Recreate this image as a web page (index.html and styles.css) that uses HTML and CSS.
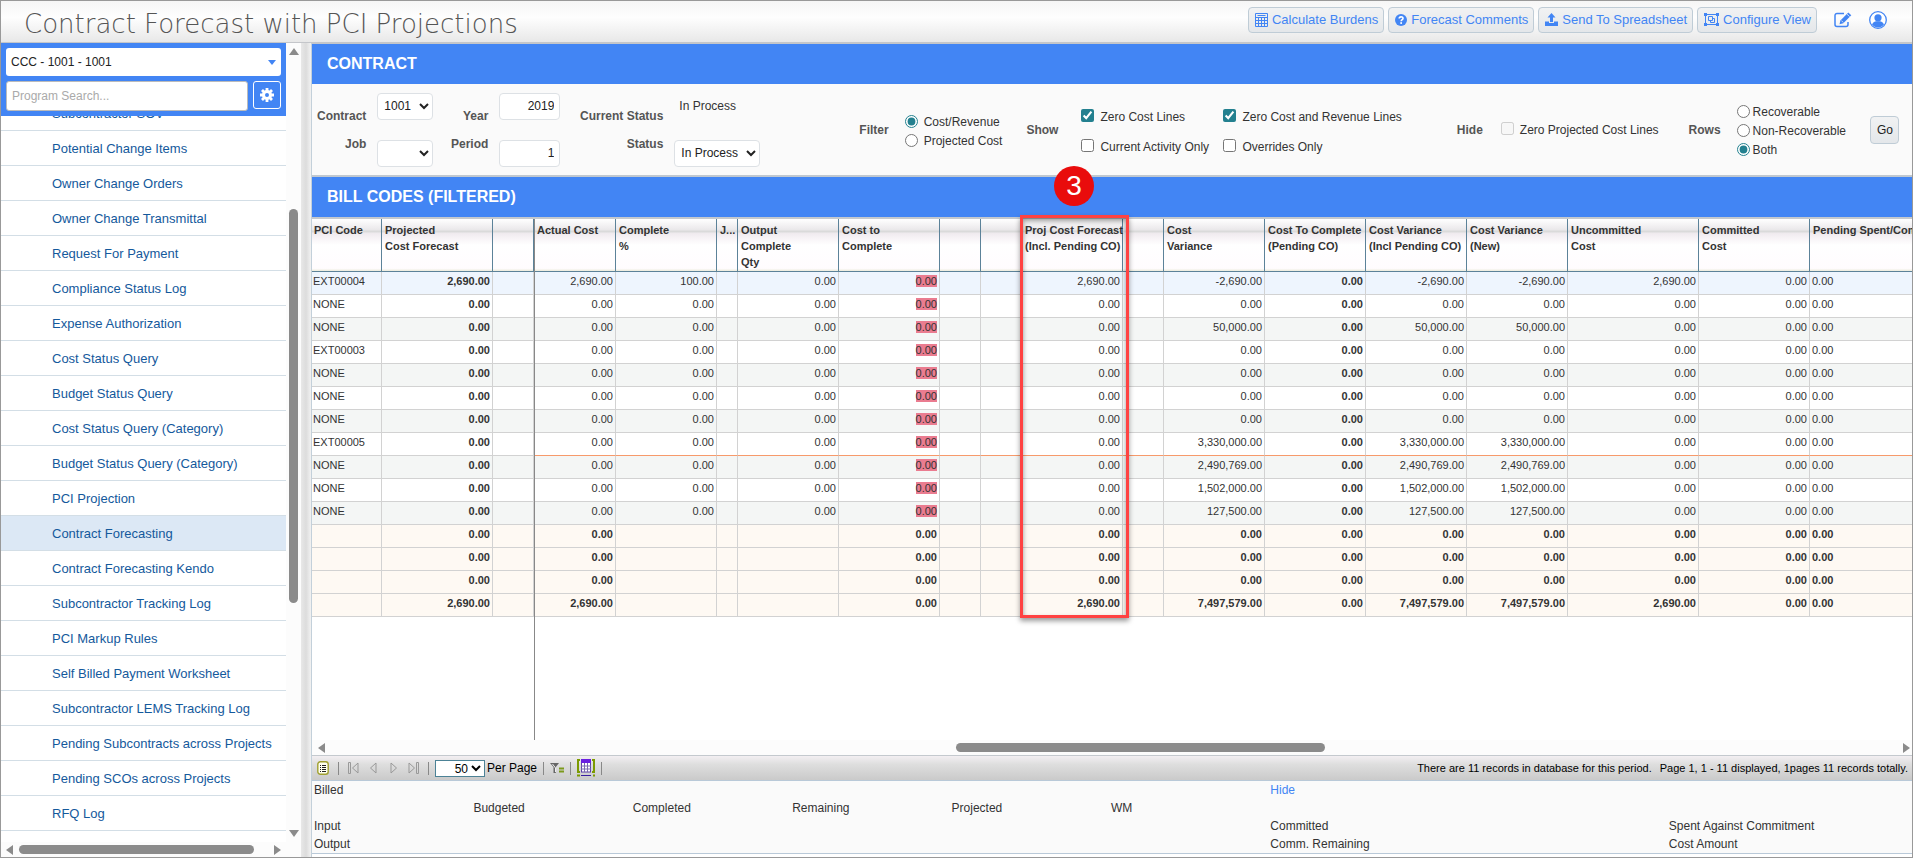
FILE: index.html
```html
<!DOCTYPE html>
<html lang="en">
<head>
    <meta charset="UTF-8">
    <meta name="viewport" content="width=device-width, initial-scale=1.0">
    <title>Contract Forecast with PCI Projections</title>
    <link rel="stylesheet" href="styles.css">
</head>
<body>
    <header class="topbar">
        <h1>Contract Forecast with PCI Projections</h1>
        <div class="actions">
            <button class="btn">
                <svg width="13" height="14" viewBox="0 0 13 14" fill="none" stroke="#4285f4"><path d="M.5.5h12v13H.5zM.5 4.5h12M.5 7.500h12M.5 10.500h12M3.500 4.500v9M6.500 4.500v9M9.500 4.500v9M2.500 2.500h8"/></svg>
                Calculate Burdens
            </button>
            <button class="btn">
                <svg width="12" height="12" viewBox="0 0 12 12"><circle cx="6" cy="6" r="6" fill="#4285f4"/><path d="M4.200 4.500C4.200 2.300 8 2.300 8 4.400 8 5.700 6.200 5.700 6.200 7.200" fill="none" stroke="#fff" stroke-width="1.600"/><rect x="5.300" y="8.200" width="1.700" height="1.700" fill="#fff"/></svg>
                Forecast Comments
            </button>
            <button class="btn">
                <svg width="13" height="13" viewBox="0 0 13 13" fill="#4285f4"><path d="M6.500 0l4 4.500H8V9H5V4.500H2.500zM0 8.500h4V10h5V8.500h4V13H0z"/></svg>
                Send To Spreadsheet
            </button>
            <button class="btn">
                <svg width="15" height="13" viewBox="0 0 15 13" fill="none" stroke="#4285f4"><path d="M1.500 1.500h12v10h-12zM4.500 3.500h4v4h-4zM8.500 5.500h2v4h-4v-2"/><path d="M0 0h3v3H0zM12 0h3v3h-3zM0 10h3v3H0zM12 10h3v3h-3z" fill="#4285f4" stroke="none"/></svg>
                Configure View
            </button>
            <button class="icon-btn" aria-label="Edit">
                <svg width="18" height="16" viewBox="0 0 18 16" fill="none" stroke="#4285f4" stroke-width="1.500"><path d="M10 1.500H3A2 2 0 0 0 1 3.500v9a2 2 0 0 0 2 2h9a2 2 0 0 0 2-2V10"/><path d="M14.300.5l3 2.700-8 8-3.800 1 .9-3.800z" fill="#4285f4" stroke="none"/><path d="M7.300 8.500l2 2M13 2.200l2.600 2.400" stroke="#f4f4f4" stroke-width=".8"/></svg>
            </button>
            <button class="icon-btn" aria-label="User">
                <svg width="18" height="18" viewBox="0 0 18 18"><circle cx="9" cy="9" r="8.300" fill="#fff" stroke="#4285f4" stroke-width="1.300"/><circle cx="9" cy="6.800" r="3.600" fill="#4285f4"/><path d="M3 13.500C4 11 6 10.600 7 10.300h4c1 .3 3 .7 4 3.200C12 17.500 6 17.500 3 13.500z" fill="#4285f4"/></svg>
            </button>
        </div>
    </header>

    <div class="layout">
        <aside class="sidebar">
            <div class="sidebar-body">
                <div class="nav-col">
                    <div class="search-box">
                        <button class="project">CCC - 1001 - 1001 <span class="caret"></span></button>
                        <div class="search-row">
                            <input type="text" class="search" placeholder="Program Search..." aria-label="Program Search">
                            <button class="gear" aria-label="Settings">
                                <svg width="14" height="14" viewBox="0 0 14 14"><circle cx="7" cy="7" r="3.500" fill="none" stroke="#fff" stroke-width="3"/><path d="M7 0v3M7 11v3M0 7h3M11 7h3M2 2l2.200 2.200M9.800 9.800L12 12M12 2L9.800 4.200M4.200 9.800L2 12" stroke="#fff" stroke-width="2.800"/></svg>
                            </button>
                        </div>
                    </div>
                    <nav class="menu">
                        <a href="#">Subcontractor SOV</a>
                        <a href="#">Potential Change Items</a>
                        <a href="#">Owner Change Orders</a>
                        <a href="#">Owner Change Transmittal</a>
                        <a href="#">Request For Payment</a>
                        <a href="#">Compliance Status Log</a>
                        <a href="#">Expense Authorization</a>
                        <a href="#">Cost Status Query</a>
                        <a href="#">Budget Status Query</a>
                        <a href="#">Cost Status Query (Category)</a>
                        <a href="#">Budget Status Query (Category)</a>
                        <a href="#">PCI Projection</a>
                        <a href="#" class="active">Contract Forecasting</a>
                        <a href="#">Contract Forecasting Kendo</a>
                        <a href="#">Subcontractor Tracking Log</a>
                        <a href="#">PCI Markup Rules</a>
                        <a href="#">Self Billed Payment Worksheet</a>
                        <a href="#">Subcontractor LEMS Tracking Log</a>
                        <a href="#">Pending Subcontracts across Projects</a>
                        <a href="#">Pending SCOs across Projects</a>
                        <a href="#">RFQ Log</a>
                    </nav>
                </div>
                <div class="vscroll">
                    <span class="arrow up"></span>
                    <div class="track"><div class="thumb"></div></div>
                    <span class="arrow down"></span>
                </div>
            </div>
            <div class="hscroll side-hscroll">
                <span class="arrow left"></span>
                <div class="thumb"></div>
                <span class="arrow right"></span>
            </div>
        </aside>
        <div class="splitter"></div>

        <main class="content">
            <h2 class="section-title">CONTRACT</h2>
            <form class="filters">
                <div class="labels first">
                    <label for="contract">Contract</label>
                    <label for="job">Job</label>
                </div>
                <div class="controls">
                    <select id="contract" class="w-small"><option>1001</option></select>
                    <select id="job" class="w-small"><option></option></select>
                </div>
                <div class="labels second">
                    <label for="year">Year</label>
                    <label for="period">Period</label>
                </div>
                <div class="controls">
                    <input type="text" id="year" value="2019">
                    <input type="text" id="period" value="1">
                </div>
                <div class="labels third">
                    <span>Current Status</span>
                    <label for="status">Status</label>
                </div>
                <div class="controls">
                    <span class="static">In Process</span>
                    <select id="status" class="w-status"><option>In Process</option></select>
                </div>

                <div class="group filter-group">
                    <b>Filter</b>
                    <div class="radios">
                        <label><input type="radio" name="filter" checked> Cost/Revenue</label>
                        <label><input type="radio" name="filter"> Projected Cost</label>
                    </div>
                </div>
                <div class="group show-group">
                    <b>Show</b>
                    <div class="checks">
                        <label><input type="checkbox" checked> Zero Cost Lines</label>
                        <label><input type="checkbox" checked> Zero Cost and Revenue Lines</label>
                        <label><input type="checkbox"> Current Activity Only</label>
                        <label><input type="checkbox"> Overrides Only</label>
                    </div>
                </div>
                <div class="group hide-group">
                    <b>Hide</b>
                    <label><input type="checkbox" disabled> Zero Projected Cost Lines</label>
                </div>
                <div class="group rows-group">
                    <b>Rows</b>
                    <div class="radios tight">
                        <label><input type="radio" name="rows"> Recoverable</label>
                        <label><input type="radio" name="rows"> Non-Recoverable</label>
                        <label><input type="radio" name="rows" checked> Both</label>
                    </div>
                </div>
                <button type="button" class="btn go">Go</button>
            </form>

            <h2 class="section-title">BILL CODES (FILTERED)</h2>
            <div class="grid-wrap">
                <div class="grid-view">
                    <table class="grid">
                        <colgroup>
                            <col class="c-code"><col class="c-med"><col class="c-gap"><col class="c-actual"><col class="c-num"><col class="c-tiny"><col class="c-num"><col class="c-num"><col class="c-gap"><col class="c-gap"><col class="c-num"><col class="c-gap"><col class="c-num"><col class="c-num"><col class="c-num"><col class="c-num"><col class="c-wide"><col class="c-med"><col class="c-wide">
                        </colgroup>
                        <thead>
                            <tr><th>PCI Code</th><th>Projected<br>Cost Forecast</th><th></th><th>Actual Cost</th><th>Complete<br>%</th><th>J...</th><th>Output<br>Complete<br>Qty</th><th>Cost to<br>Complete</th><th></th><th></th><th>Proj Cost Forecast<br>(Incl. Pending CO)</th><th></th><th>Cost<br>Variance</th><th>Cost To Complete<br>(Pending CO)</th><th>Cost Variance<br>(Incl Pending CO)</th><th>Cost Variance<br>(New)</th><th>Uncommitted<br>Cost</th><th>Committed<br>Cost</th><th>Pending Spent/Com</th></tr>
                        </thead>
                        <tbody>
                            <tr class="selected"><td>EXT00004</td><td>2,690.00</td><td></td><td>2,690.00</td><td>100.00</td><td></td><td>0.00</td><td><mark>0.00</mark></td><td></td><td></td><td>2,690.00</td><td></td><td>-2,690.00</td><td>0.00</td><td>-2,690.00</td><td>-2,690.00</td><td>2,690.00</td><td>0.00</td><td>0.00</td></tr>
                            <tr><td>NONE</td><td>0.00</td><td></td><td>0.00</td><td>0.00</td><td></td><td>0.00</td><td><mark>0.00</mark></td><td></td><td></td><td>0.00</td><td></td><td>0.00</td><td>0.00</td><td>0.00</td><td>0.00</td><td>0.00</td><td>0.00</td><td>0.00</td></tr>
                            <tr><td>NONE</td><td>0.00</td><td></td><td>0.00</td><td>0.00</td><td></td><td>0.00</td><td><mark>0.00</mark></td><td></td><td></td><td>0.00</td><td></td><td>50,000.00</td><td>0.00</td><td>50,000.00</td><td>50,000.00</td><td>0.00</td><td>0.00</td><td>0.00</td></tr>
                            <tr><td>EXT00003</td><td>0.00</td><td></td><td>0.00</td><td>0.00</td><td></td><td>0.00</td><td><mark>0.00</mark></td><td></td><td></td><td>0.00</td><td></td><td>0.00</td><td>0.00</td><td>0.00</td><td>0.00</td><td>0.00</td><td>0.00</td><td>0.00</td></tr>
                            <tr><td>NONE</td><td>0.00</td><td></td><td>0.00</td><td>0.00</td><td></td><td>0.00</td><td><mark>0.00</mark></td><td></td><td></td><td>0.00</td><td></td><td>0.00</td><td>0.00</td><td>0.00</td><td>0.00</td><td>0.00</td><td>0.00</td><td>0.00</td></tr>
                            <tr><td>NONE</td><td>0.00</td><td></td><td>0.00</td><td>0.00</td><td></td><td>0.00</td><td><mark>0.00</mark></td><td></td><td></td><td>0.00</td><td></td><td>0.00</td><td>0.00</td><td>0.00</td><td>0.00</td><td>0.00</td><td>0.00</td><td>0.00</td></tr>
                            <tr><td>NONE</td><td>0.00</td><td></td><td>0.00</td><td>0.00</td><td></td><td>0.00</td><td><mark>0.00</mark></td><td></td><td></td><td>0.00</td><td></td><td>0.00</td><td>0.00</td><td>0.00</td><td>0.00</td><td>0.00</td><td>0.00</td><td>0.00</td></tr>
                            <tr class="marked"><td>EXT00005</td><td>0.00</td><td></td><td>0.00</td><td>0.00</td><td></td><td>0.00</td><td><mark>0.00</mark></td><td></td><td></td><td>0.00</td><td></td><td>3,330,000.00</td><td>0.00</td><td>3,330,000.00</td><td>3,330,000.00</td><td>0.00</td><td>0.00</td><td>0.00</td></tr>
                            <tr><td>NONE</td><td>0.00</td><td></td><td>0.00</td><td>0.00</td><td></td><td>0.00</td><td><mark>0.00</mark></td><td></td><td></td><td>0.00</td><td></td><td>2,490,769.00</td><td>0.00</td><td>2,490,769.00</td><td>2,490,769.00</td><td>0.00</td><td>0.00</td><td>0.00</td></tr>
                            <tr><td>NONE</td><td>0.00</td><td></td><td>0.00</td><td>0.00</td><td></td><td>0.00</td><td><mark>0.00</mark></td><td></td><td></td><td>0.00</td><td></td><td>1,502,000.00</td><td>0.00</td><td>1,502,000.00</td><td>1,502,000.00</td><td>0.00</td><td>0.00</td><td>0.00</td></tr>
                            <tr><td>NONE</td><td>0.00</td><td></td><td>0.00</td><td>0.00</td><td></td><td>0.00</td><td><mark>0.00</mark></td><td></td><td></td><td>0.00</td><td></td><td>127,500.00</td><td>0.00</td><td>127,500.00</td><td>127,500.00</td><td>0.00</td><td>0.00</td><td>0.00</td></tr>
                        </tbody>
                        <tfoot>
                            <tr><td></td><td>0.00</td><td></td><td>0.00</td><td></td><td></td><td></td><td>0.00</td><td></td><td></td><td>0.00</td><td></td><td>0.00</td><td>0.00</td><td>0.00</td><td>0.00</td><td>0.00</td><td>0.00</td><td>0.00</td></tr>
                            <tr><td></td><td>0.00</td><td></td><td>0.00</td><td></td><td></td><td></td><td>0.00</td><td></td><td></td><td>0.00</td><td></td><td>0.00</td><td>0.00</td><td>0.00</td><td>0.00</td><td>0.00</td><td>0.00</td><td>0.00</td></tr>
                            <tr><td></td><td>0.00</td><td></td><td>0.00</td><td></td><td></td><td></td><td>0.00</td><td></td><td></td><td>0.00</td><td></td><td>0.00</td><td>0.00</td><td>0.00</td><td>0.00</td><td>0.00</td><td>0.00</td><td>0.00</td></tr>
                            <tr><td></td><td>2,690.00</td><td></td><td>2,690.00</td><td></td><td></td><td></td><td>0.00</td><td></td><td></td><td>2,690.00</td><td></td><td>7,497,579.00</td><td>0.00</td><td>7,497,579.00</td><td>7,497,579.00</td><td>2,690.00</td><td>0.00</td><td>0.00</td></tr>
                        </tfoot>
                    </table>
                </div>
                <div class="highlight"></div>
                <div class="callout">3</div>
            </div>
            <div class="hscroll grid-hscroll">
                <span class="arrow left"></span>
                <div class="track"><div class="thumb"></div></div>
                <span class="arrow right"></span>
            </div>

            <div class="pager">
                <button class="tool" aria-label="Menu">
                    <svg width="12" height="14" viewBox="0 0 12 14"><rect x=".8" y=".8" width="10.400" height="12.400" rx="2.500" fill="#fffff0" stroke="#a0a030" stroke-width="1.400"/><path d="M3 4.500h1M5 4.500h4M3 6.500h1M5 6.500h4M3 8.500h1M5 8.500h4M3 10.500h1M5 10.500h4" stroke="#222"/></svg>
                </button>
                <span class="sep"></span>
                <button class="tool" aria-label="First page"><svg width="11" height="12" viewBox="0 0 11 12" fill="none" stroke="#999"><path d="M.5.5h2v11h-2zM10 1v10L4.500 6z"/></svg></button>
                <button class="tool" aria-label="Previous page"><svg width="11" height="12" viewBox="0 0 11 12" fill="none" stroke="#999"><path d="M8 1v10L2.500 6z"/></svg></button>
                <button class="tool" aria-label="Next page"><svg width="11" height="12" viewBox="0 0 11 12" fill="none" stroke="#999"><path d="M3 1v10L8.500 6z"/></svg></button>
                <button class="tool" aria-label="Last page"><svg width="11" height="12" viewBox="0 0 11 12" fill="none" stroke="#999"><path d="M8.500.5h2v11h-2zM1 1v10L6.500 6z"/></svg></button>
                <div class="pager-options">
                    <span class="sep"></span>
                    <select id="perpage" class="per-page"><option>50</option></select>
                    <label for="perpage">Per Page</label>
                    <span class="sep"></span>
                    <button class="tool" aria-label="Filter"><svg width="14" height="10" viewBox="0 0 14 10"><path d="M0 0h9L5.800 4v6H3.500V4z" fill="#666"/><path d="M2.500 1l3 4v4" stroke="#eee" fill="none"/><path d="M9 5.500h5M9 8.500h5" stroke="#7c9a1c" stroke-width="2"/></svg></button>
                    <span class="sep"></span>
                    <button class="tool" aria-label="Columns"><svg width="18" height="18" viewBox="0 0 18 18"><path d="M3 1H1v12h2M15 1h2v12h-2M0 16.500h3M16 16.500h2" fill="none" stroke="#7c9a00" stroke-width="2"/><rect x="4.500" y="1" width="9" height="12" fill="#fff" stroke="#5b3fa8"/><rect x="4" y="0" width="10" height="4" fill="#6a1fe0"/><path d="M4 7h10M4 10h10M7.500 4v9M10.500 4v9" stroke="#7a6ab0"/><path d="M4 16.500h10" stroke="#3a1fa0"/></svg></button>
                    <span class="sep"></span>
                </div>
                <div class="pager-info"><span>There are 11 records in database for this period.</span><span>Page 1, 1 - 11 displayed, 1pages 11 records totally.</span></div>
            </div>

            <div class="summary">
                <span>Billed</span><span></span><span></span><span></span><span></span><span></span><a href="#">Hide</a><span></span>
                <span></span><span>Budgeted</span><span>Completed</span><span>Remaining</span><span>Projected</span><span>WM</span><span></span><span></span>
                <span>Input</span><span></span><span></span><span></span><span></span><span></span><span>Committed</span><span>Spent Against Commitment</span>
                <span>Output</span><span></span><span></span><span></span><span></span><span></span><span>Comm. Remaining</span><span>Cost Amount</span>
            </div>
        </main>
    </div>
</body>
</html>
```
FILE: styles.css
```css
* {
    box-sizing: border-box;
}
body {
    font-family: "Liberation Sans", Arial, sans-serif;
    font-size: 12px;
    color: #333;
    margin: 0;
    height: 100vh;
    display: flex;
    flex-direction: column;
    border: 1px solid #999;
    overflow: hidden;
    background-color: white;
}
button, select, input {
    font-family: inherit;
    font-size: inherit;
    margin: 0;
}
button {
    cursor: pointer;
}
a {
    color: #4285f4;
    text-decoration: none;
}

/* top bar */
.topbar {
    display: flex;
    justify-content: space-between;
    align-items: center;
    height: 42px;
    flex-shrink: 0;
    padding: 0 25px 4px 23px;
    border-bottom: 1px solid #c4c6ca;
    background: linear-gradient(#f6f6f6, #fefefe 40%, #e8e8e8);
}
.topbar h1 {
    font-family: "DejaVu Sans", Verdana, sans-serif;
    font-weight: 200;
    font-size: 26px;
    line-height: 26px;
    margin: 0;
    padding-top: 8px;
    color: #555;
    white-space: nowrap;
}
.actions {
    display: flex;
    align-items: center;
    gap: 4px;
}
.btn {
    display: flex;
    align-items: center;
    gap: 4px;
    height: 26px;
    padding: 0 5px 0 6px;
    border: 1px solid #bfccd6;
    border-radius: 4px;
    background: linear-gradient(#f1f2f3, #e4e7ea);
    color: #4285f4;
    font-size: 13px;
    white-space: nowrap;
}
.icon-btn {
    display: flex;
    padding: 0;
    margin-left: 13px;
    border: none;
    background: none;
}

/* side menu */
.layout {
    display: flex;
    flex: 1;
    min-height: 0;
}
.sidebar {
    display: flex;
    flex-direction: column;
    width: 300px;
    flex-shrink: 0;
}
.sidebar-body {
    display: flex;
    flex: 1;
    min-height: 0;
}
.nav-col {
    display: flex;
    flex-direction: column;
    flex: 1;
    min-width: 0;
}
.search-box {
    padding: 5px;
    height: 73px;
    flex-shrink: 0;
    background-color: #4285f4;
    z-index: 1;
}
.project {
    display: flex;
    justify-content: space-between;
    align-items: center;
    width: 100%;
    height: 28px;
    padding: 0 5px;
    border: none;
    border-radius: 3px;
    background-color: white;
    color: #222;
}
.caret {
    border: 4px solid transparent;
    border-top: 5px solid #4285f4;
    border-bottom: none;
}
.search-row {
    display: flex;
    gap: 5px;
    margin-top: 5px;
}
.search {
    flex: 1;
    min-width: 0;
    height: 30px;
    padding: 0 5px;
    border: 1px solid #bbb;
    border-radius: 3px;
}
.search::placeholder {
    color: #aaa;
}
.gear {
    display: flex;
    align-items: center;
    justify-content: center;
    width: 28px;
    height: 28px;
    padding: 0;
    border: 1px solid white;
    border-radius: 3px;
    background-color: #4285f4;
}
.menu {
    display: flex;
    flex-direction: column;
    flex: 1;
    min-height: 0;
    margin-top: -20px;
    overflow: hidden;
}
.menu a {
    height: 35px;
    flex-shrink: 0;
    padding-left: 51px;
    line-height: 35px;
    font-size: 13px;
    color: #14599c;
    border-bottom: 1px solid #d3dee6;
    white-space: nowrap;
}
.menu a.active {
    background-color: #dce8f5;
}

/* scroll bars */
.arrow {
    flex-shrink: 0;
    border: 5px solid transparent;
}
.arrow.up {
    border-top: none;
    border-bottom: 7px solid #8b8b8b;
}
.arrow.down {
    border-bottom: none;
    border-top: 7px solid #8b8b8b;
}
.arrow.left {
    border-left: none;
    border-right: 7px solid #8b8b8b;
}
.arrow.right {
    border-right: none;
    border-left: 7px solid #8b8b8b;
}
.thumb {
    background-color: #8b8b8b;
    border-radius: 5px;
}
.vscroll {
    display: flex;
    flex-direction: column;
    align-items: center;
    width: 15px;
    padding: 5px 0;
    background-color: #fcfcfc;
}
.vscroll .track {
    flex: 1;
    padding-top: 154px;
}
.vscroll .thumb {
    width: 9px;
    height: 394px;
}
.hscroll {
    display: flex;
    align-items: center;
    flex-shrink: 0;
    height: 15px;
    background-color: #fcfcfc;
}
.hscroll .thumb {
    height: 9px;
}
.side-hscroll {
    padding: 0 20px 0 5px;
    gap: 6px;
}
.side-hscroll .thumb {
    width: 235px;
    margin-right: auto;
}
.grid-hscroll {
    padding: 0 2px 0 6px;
}
.grid-hscroll .track {
    flex: 1;
    padding-left: 631px;
}
.grid-hscroll .thumb {
    width: 369px;
}
.splitter {
    width: 11px;
    flex-shrink: 0;
    border-right: 1px solid #c3d0da;
    background: linear-gradient(to right, #e8e8e8, #dcdcdc 50%, #f2f2f2);
}

/* contract filters */
.content {
    display: flex;
    flex-direction: column;
    flex: 1;
    min-width: 0;
    padding-bottom: 3px;
    border-top: 1px solid #c4c6ca;
}
.section-title {
    margin: 0;
    height: 40px;
    flex-shrink: 0;
    padding-left: 15px;
    line-height: 39px;
    font-size: 16px;
    color: white;
    background-color: #4285f4;
}
.filters {
    display: flex;
    align-items: center;
    height: 93px;
    flex-shrink: 0;
    padding: 0 13px 0 5px;
    border-bottom: 2px solid #c0c8d0;
    background-color: #fafafa;
    white-space: nowrap;
}
.labels {
    display: flex;
    flex-direction: column;
    text-align: right;
    line-height: 28px;
    font-weight: bold;
    color: #555;
    padding-right: 11px;
}
.second {
    width: 66px;
}
.third {
    width: 114px;
}
.controls {
    display: flex;
    flex-direction: column;
    gap: 20px;
}
.controls select, .controls input {
    height: 27px;
    border: 1px solid #dde1e5;
    border-radius: 4px;
    background-color: white;
    color: #222;
}
.controls select {
    padding: 0 2px;
}
.controls input {
    width: 61px;
    padding: 0 5px;
    text-align: right;
}
.w-small {
    width: 56px;
}
.w-status {
    width: 86px;
}
.static {
    height: 27px;
    padding-left: 5px;
    line-height: 27px;
}
.group {
    display: flex;
    align-items: center;
}
.group b {
    color: #555;
}
.group label {
    display: flex;
    align-items: center;
    gap: 6px;
}
.group input {
    width: 13px;
    height: 13px;
    margin: 0 0 2px;
    accent-color: #23808f;
}
.radios {
    display: flex;
    flex-direction: column;
    padding-top: 4px;
    line-height: 19px;
}
.radios.tight label {
    gap: 3px;
}
.filter-group {
    margin-left: 99px;
    gap: 16px;
}
.show-group {
    margin-left: 24px;
    gap: 23px;
}
.checks {
    display: grid;
    grid-template-columns: 142px auto;
    padding-top: 4px;
    line-height: 30px;
}
.hide-group {
    margin-left: 55px;
    gap: 18px;
}
.rows-group {
    margin-left: auto;
    gap: 16px;
}
.go {
    height: 28px;
    margin-left: 24px;
    color: #222;
    font-size: 12px;
}

/* bill codes grid */
.grid-wrap {
    position: relative;
    flex: 1;
    min-height: 0;
    border-top: 2px solid #c4c9ce;
}
.grid-wrap::after {
    content: "";
    position: absolute;
    left: 222px;
    top: 0;
    bottom: 0;
    width: 1px;
    background-color: #888;
}
.grid-view {
    height: 100%;
    overflow: hidden;
}
.grid {
    width: 1629px;
    table-layout: fixed;
    border-collapse: separate;
    border-spacing: 0;
    font-size: 11px;
}
.c-code {
    width: 70px;
}
.c-med {
    width: 111px;
}
.c-gap {
    width: 41px;
}
.c-actual {
    width: 82px;
}
.c-num {
    width: 101px;
}
.c-tiny {
    width: 21px;
}
.c-wide {
    width: 131px;
}
.grid th {
    height: 53px;
    padding: 3px 0 0 3px;
    text-align: left;
    vertical-align: top;
    line-height: 16px;
    white-space: nowrap;
    border-right: 1px solid #5c8299;
    border-bottom: 1px solid #5c8299;
    background: linear-gradient(#fff, #efedef 16%, #ebe9eb 20%, #dadada 24%, #f0ebef 28%, #f8f4f7 38%, #fff 50%, #fffcfe 95%, #ecebdc);
}
.grid th:first-child {
    padding-left: 2px;
}
.grid td {
    height: 23px;
    padding: 0 2px 4px 1px;
    line-height: 18px;
    text-align: right;
    border-right: 1px solid #d2d2d2;
    border-bottom: 1px solid #d2d2d2;
}
.grid td:first-child {
    text-align: left;
}
.grid td:last-child {
    text-align: left;
    padding-left: 2px;
}
.grid td:nth-child(2), .grid td:nth-child(14) {
    font-weight: bold;
}
.grid tbody tr:nth-child(odd) {
    background-color: #f4f6f5;
}
.grid tbody tr.selected {
    background-color: #eef5fe;
}
.grid tr.marked td:nth-child(n+4) {
    border-bottom-color: #f79a6b;
}
.grid tfoot td {
    font-weight: bold;
    background-color: #fef9f3;
}
.grid mark {
    background-color: #ea7c90;
    color: inherit;
}
.highlight {
    position: absolute;
    left: 708px;
    top: -4px;
    width: 109px;
    height: 403px;
    border: 3px solid #ff4242;
    box-shadow: 0 3px 5px rgba(0, 0, 0, 0.4), inset 0 3px 5px rgba(0, 0, 0, 0.4);
}
.callout {
    position: absolute;
    left: 742px;
    top: -53px;
    width: 40px;
    height: 40px;
    border-radius: 50%;
    line-height: 40px;
    text-align: center;
    font-size: 28px;
    color: white;
    background-color: #e90c0c;
}

/* pager */
.pager {
    display: flex;
    align-items: center;
    gap: 9px;
    height: 26px;
    flex-shrink: 0;
    padding: 0 4px 0 5px;
    border-top: 1px solid #c4c9ce;
    border-bottom: 1px solid #b9c9d8;
    background: linear-gradient(#f3eff2, #dedede 35%, #cacaca);
    color: black;
}
.tool {
    display: flex;
    padding: 0;
    border: none;
    background: none;
}
.sep {
    width: 1px;
    height: 13px;
    background-color: #888;
}
.pager-options {
    display: flex;
    align-items: center;
    gap: 6px;
}
.per-page {
    width: 50px;
    height: 17px;
    border: 1px solid #4c8296;
    background-color: white;
    text-align: right;
}
.pager label {
    margin-left: -4px;
}
.pager-info {
    display: flex;
    gap: 8px;
    margin-left: auto;
    font-size: 11px;
    white-space: nowrap;
}

/* totals */
.summary {
    display: grid;
    grid-template-columns: repeat(6, 10%) 25% 15%;
    grid-auto-rows: 18px;
    flex-shrink: 0;
    padding: 0 4px 0 2px;
    line-height: 18px;
    border-bottom: 1px solid #b9c9d8;
    background-color: #fafafa;
}
```
